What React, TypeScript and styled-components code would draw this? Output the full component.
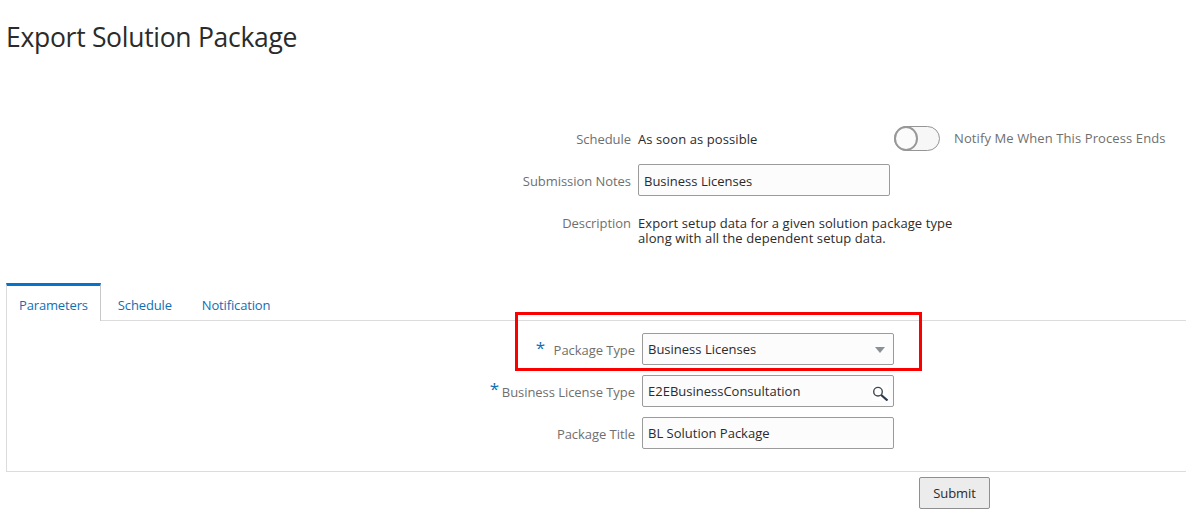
import React from 'react';
import styled, { createGlobalStyle } from 'styled-components';

const Global = createGlobalStyle`
    html, body {
        margin: 0;
        padding: 0;
        background: #fff;
        font-family: "Open Sans", "Noto Sans", sans-serif;
    }
`;

const Page = styled.div`
    width: 1186px;
    height: 527px;
    overflow: hidden;
    padding-left: 6px;
    box-sizing: border-box;
`;

const Title = styled.h1`
    margin: 0;
    height: 125px;
    padding-top: 19px;
    box-sizing: border-box;
    font-size: 26.5px;
    line-height: 36px;
    font-weight: 400;
    letter-spacing: -0.29px;
    color: #2b2b2b;
`;

const HeaderForm = styled.div`
    display: grid;
    grid-template-columns: 625px 256px auto;
    column-gap: 7px;
    height: 158px;
    align-content: start;
`;

const Label = styled.div`
    text-align: right;
    font-size: 13px;
    line-height: 15px;
    letter-spacing: -0.05px;
    color: #6f6f6f;
`;

const Value = styled.div`
    font-size: 13px;
    line-height: 15px;
    letter-spacing: 0.09px;
    color: #2b2b2b;
`;

const ScheduleLabel = styled(Label)`
    padding-top: 7px;
`;

const ScheduleValue = styled(Value)`
    padding-top: 7px;
`;

const NotifyWrap = styled.div`
    display: flex;
    align-items: center;
    gap: 14px;
    height: 26px;
    margin-left: -7px;
    margin-bottom: 13px;
`;

const Toggle = styled.div`
    position: relative;
    width: 46px;
    height: 25px;
    border: 1px solid #959595;
    border-radius: 13px;
    box-sizing: border-box;
    background: #f7f7f7;
`;

const Knob = styled.span`
    position: absolute;
    left: -1px;
    top: -1px;
    width: 24px;
    height: 25px;
    border: 2px solid #989898;
    border-radius: 50%;
    box-sizing: border-box;
    background: #fbfbfb;
`;

const NotifyText = styled.span`
    font-size: 13px;
    letter-spacing: 0.1px;
    color: #6f6f6f;
    white-space: nowrap;
`;

const NotesLabel = styled(Label)`
    padding-top: 10px;
`;

const Field = styled.div<{ $nudge?: boolean }>`
    position: relative;
    display: flex;
    align-items: center;
    justify-content: space-between;
    width: 252px;
    height: 32px;
    padding: ${p => (p.$nudge ? '2px' : '0')} 5px 0 5px;
    box-sizing: border-box;
    border: 1px solid #9b9b9b;
    border-radius: 2px;
    background: #fcfcfc;
    font-size: 13px;
    letter-spacing: 0;
    color: #2b2b2b;
`;

const DescLabel = styled(Label)`
    grid-column: 1;
    padding-top: 20px;
`;

const DescValue = styled(Value)`
    grid-column: 2 / span 2;
    padding-top: 20px;
    width: 340px;
`;

const TabBar = styled.div`
    display: flex;
    height: 38px;
    box-sizing: border-box;
    border-bottom: 1px solid #dcdcdc;
`;

const Tab = styled.div<{ $active?: boolean }>`
    height: ${p => (p.$active ? 38 : 37)}px;
    box-sizing: border-box;
    padding: ${p => (p.$active ? '12px 12px 0' : '15px 15px 0')};
    margin-right: ${p => (p.$active ? 2 : 0)}px;
    border-top: ${p => (p.$active ? '3px solid #0572ce' : 'none')};
    border-left: ${p => (p.$active ? '1px solid #dcdcdc' : 'none')};
    border-right: ${p => (p.$active ? '1px solid #c8c8c8' : 'none')};
    background: #fff;
    font-size: 13px;
    line-height: 15px;
    letter-spacing: -0.15px;
    color: #0f6fb5;
`;

const Panel = styled.div`
    position: relative;
    height: 151px;
    box-sizing: border-box;
    border-left: 1px solid #dcdcdc;
    border-bottom: 1px solid #dcdcdc;
    padding: 12px 0 0 0;
    display: grid;
    grid-template-columns: 628px auto;
    column-gap: 7px;
    grid-auto-rows: 32px;
    row-gap: 10px;
    align-content: start;
`;

const PanelLabel = styled(Label)`
    position: relative;
    padding-top: 10px;
`;

const Star = styled.span<{ $far?: boolean }>`
    position: absolute;
    right: ${p => (p.$far ? 136 : 90)}px;
    top: ${p => (p.$far ? 5 : 6)}px;
    font-size: 17px;
    line-height: 18px;
    color: #0f6fb5;
`;

const Arrow = styled.span`
    width: 0;
    height: 0;
    margin: 1px 3px 0 0;
    border-left: 5px solid transparent;
    border-right: 5px solid transparent;
    border-top: 6px solid #8b9095;
`;

const Highlight = styled.div`
    position: absolute;
    left: 508px;
    top: -9px;
    width: 407px;
    height: 59px;
    border: 3px solid #fa0000;
    box-sizing: border-box;
    pointer-events: none;
`;

const Actions = styled.div`
    display: flex;
    padding: 5px 0 0 913px;
`;

const Button = styled.button`
    width: 71px;
    height: 32px;
    padding: 0;
    border: 1px solid #8f8f8f;
    border-radius: 2px;
    background: #ececec;
    font-family: inherit;
    font-size: 13px;
    letter-spacing: -0.1px;
    color: #2b2b2b;
`;

const SearchSvg = styled.svg`
    margin-top: 4px;
    background: #fff;
`;

function SearchIcon() {
    return (
        <SearchSvg width="16" height="16" viewBox="0 0 16 16" fill="none">
            <circle cx="6" cy="6.7" r="4.3" stroke="#3f4a52" strokeWidth="1.4" />
            <path d="M9.2 10L15.5 15.5" stroke="#2b3a4a" strokeWidth="2.2" />
        </SearchSvg>
    );
}

export default function App() {
    return (
        <Page>
            <Global />
            <Title>Export Solution Package</Title>
            <HeaderForm>
                <ScheduleLabel>Schedule</ScheduleLabel>
                <ScheduleValue>As soon as possible</ScheduleValue>
                <NotifyWrap>
                    <Toggle><Knob /></Toggle>
                    <NotifyText>Notify Me When This Process Ends</NotifyText>
                </NotifyWrap>
                <NotesLabel>Submission Notes</NotesLabel>
                <Field $nudge>Business Licenses</Field>
                <div />
                <DescLabel>Description</DescLabel>
                <DescValue>
                    Export setup data for a given solution package type<br />
                    along with all the dependent setup data.
                </DescValue>
            </HeaderForm>
            <TabBar>
                <Tab $active>Parameters</Tab>
                <Tab>Schedule</Tab>
                <Tab>Notification</Tab>
            </TabBar>
            <Panel>
                <Highlight />
                <PanelLabel><Star>*</Star>Package Type</PanelLabel>
                <Field>
                    Business Licenses
                    <Arrow />
                </Field>
                <PanelLabel><Star $far>*</Star>Business License Type</PanelLabel>
                <Field>
                    E2EBusinessConsultation
                    <SearchIcon />
                </Field>
                <PanelLabel>Package Title</PanelLabel>
                <Field>BL Solution Package</Field>
            </Panel>
            <Actions>
                <Button>Submit</Button>
            </Actions>
        </Page>
    );
}
